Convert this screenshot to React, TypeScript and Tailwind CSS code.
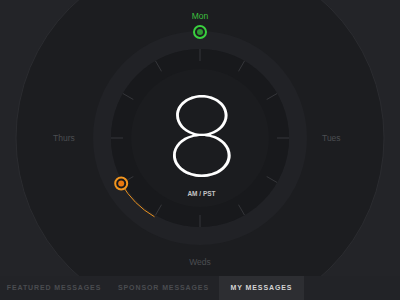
import React from 'react';

const tabs = [
  { label: 'FEATURED MESSAGES', width: 'w-[108px]', active: false },
  { label: 'SPONSOR MESSAGES', width: 'w-[111px]', active: false },
  { label: 'MY MESSAGES', width: 'w-[85px]', active: true },
];

const CX = 200;
const CY = 138;

function polar(r: number, deg: number) {
  const a = (deg * Math.PI) / 180;
  return { x: CX + r * Math.cos(a), y: CY + r * Math.sin(a) };
}

function Dial() {
  const ticks = Array.from({ length: 12 }, (_, i) => {
    const a = i * 30;
    const p1 = polar(77, a);
    const p2 = polar(89, a);
    return <line key={i} x1={p1.x} y1={p1.y} x2={p2.x} y2={p2.y} stroke="#35363a" strokeWidth={1} />;
  });
  const arcStart = polar(91, 150);
  const arcEnd = polar(91, 120);

  return (
    <svg width={400} height={276} viewBox="0 0 400 276" className="block">
      <circle cx={CX} cy={CY} r={184} fill="#1c1d20" stroke="#2b2c30" strokeWidth={1} />
      <circle cx={CX} cy={CY} r={98} fill="none" stroke="#212226" strokeWidth={18} />
      <circle cx={CX} cy={CY} r={89} fill="#18191c" />
      <circle cx={CX} cy={CY} r={69} fill="#1b1c1f" />
      {ticks}
      <path
        d={`M ${arcStart.x} ${arcStart.y} A 91 91 0 0 0 ${arcEnd.x} ${arcEnd.y}`}
        fill="none"
        stroke="#e8901e"
        strokeWidth={1}
      />
      <circle cx={arcStart.x} cy={arcStart.y} r={6} fill="#18191c" stroke="#f3961f" strokeWidth={2} />
      <circle cx={arcStart.x} cy={arcStart.y} r={3} fill="#e8780f" />
      <circle cx={200} cy={32} r={6} fill="#1c1d20" stroke="#3ad13f" strokeWidth={2} />
      <circle cx={200} cy={32} r={3} fill="#2f9a33" />
    </svg>
  );
}

export default function App() {
  return (
    <div className="w-[400px] h-[300px] bg-[#232428] flex flex-col overflow-hidden" style={{ fontFamily: '"Liberation Sans", Arial, sans-serif' }}>
      {/* Dial */}
      <div className="relative h-[276px]">
        <Dial />
        {/* day labels sit on the dial */}
        <div className="absolute left-0 right-0 top-[10px] text-center text-[8.5px] text-[#3cbf3f]">Mon</div>
        <div className="absolute left-[53px] top-[132px] text-[8.5px] text-[#4b4d51]">Thurs</div>
        <div className="absolute left-[322px] top-[132px] text-[8.5px] text-[#4b4d51]">Tues</div>
        <div className="absolute left-0 right-0 top-[256px] text-center text-[8.5px] text-[#4b4d51]">Weds</div>

        {/* center readout */}
        <div className="absolute inset-0 flex flex-col items-center pt-[91px] pl-[3px]">
          <div
            className="text-[110px] leading-[90px] font-thin text-white scale-x-[1.16]"
            style={{ fontFamily: 'Inter, "Noto Sans", sans-serif' }}
          >
            8
          </div>
          <div className="mt-[8px] text-[6.5px] font-bold text-[#c4c4c4]">AM / PST</div>
        </div>
      </div>

      {/* Tabs */}
      <nav className="flex h-[24px] bg-[#222327]">
        {tabs.map((tab) => (
          <div
            key={tab.label}
            className={`${tab.width} flex items-center justify-center text-[7px] font-bold tracking-[0.9px] whitespace-nowrap ${
              tab.active ? 'bg-[#2d2e32] text-[#d4d4d4]' : 'text-[#4a4c50]'
            }`}
          >
            {tab.label}
          </div>
        ))}
      </nav>
    </div>
  );
}
